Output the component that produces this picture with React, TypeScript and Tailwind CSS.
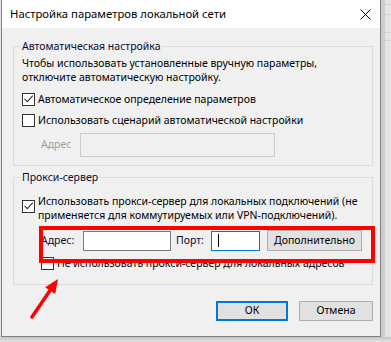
import React from "react";

function CheckBox({ checked }: { checked?: boolean }) {
  return (
    <span className="block w-[13px] h-[13px] shrink-0 border border-[#333333] bg-white">
      {checked && (
        <svg width="11" height="11" viewBox="0 0 11 11" className="block">
          <path d="M1.5 4.8 L4.3 7.6 L9.8 1.6" fill="none" stroke="#333333" strokeWidth="1.1" />
        </svg>
      )}
    </span>
  );
}

export default function App() {
  return (
    <div className="relative w-[391px] h-[342px] overflow-hidden bg-[#e6e6e6] font-['Noto_Sans',sans-serif] text-[10.5px] text-black">
      <div className="flex h-[337px]">
        <div className="w-[1px] bg-[#e6e6e6]" />
        <div className="w-[380px] shrink-0 flex flex-col border-x border-b border-[#7f7f7f] bg-[#f0f0f0]">
          <div className="h-[28px] shrink-0 bg-white flex items-center justify-between pl-[8px] pr-[9px]">
            <span className="text-[11.3px]">Настройка параметров локальной сети</span>
            <svg width="11" height="11" viewBox="0 0 11 11" className="block">
              <path d="M0.5 0.5 L10.5 10.5 M10.5 0.5 L0.5 10.5" stroke="#000000" strokeWidth="1" />
            </svg>
          </div>
          <div className="flex flex-col pt-[11px] pl-[11px] pr-[7px]">
            <fieldset className="border border-[#dcdcdc] px-[8px] pb-[8px]">
              <legend className="-ml-[2px] px-[2px] leading-[14px] text-[#0a0a30]">Автоматическая настройка</legend>
              <p className="mt-[3px] leading-[14px]">
                Чтобы использовать установленные вручную параметры,
                <br />
                отключите автоматическую настройку.
              </p>
              <div className="mt-[8px] flex items-start gap-[3px]">
                <span className="mt-[1px]"><CheckBox checked /></span>
                <span className="leading-[14px]">Автоматическое определение параметров</span>
              </div>
              <div className="mt-[7px] flex items-start gap-[3px]">
                <span className="mt-[1px]"><CheckBox /></span>
                <span className="leading-[14px]">Использовать сценарий автоматической настройки</span>
              </div>
              <div className="mt-[6px] flex items-center">
                <span className="ml-[19px] w-[39px] text-[#a0a0a0]">Адрес</span>
                <div className="w-[195px] h-[24px] border border-[#cccccc] bg-[#f0f0f0]" />
              </div>
            </fieldset>

            <fieldset className="mt-[4px] border border-[#dcdcdc] px-[8px] pb-[14px]">
              <legend className="-ml-[2px] px-[2px] leading-[14px] text-[#0a0a30]">Прокси-сервер</legend>
              <div className="mt-[10px] flex items-start gap-[3px]">
                <span className="mt-[6px]"><CheckBox checked /></span>
                <span className="leading-[14px] whitespace-nowrap">
                  Использовать прокси-сервер для локальных подключений (не
                  <br />
                  применяется для коммутируемых или VPN-подключений).
                </span>
              </div>
              <div className="mt-[8px] ml-[19px] flex items-center">
                <span className="w-[42px] text-[#0a0a30]">Адрес:</span>
                <div className="w-[88px] h-[20px] border border-[#7a7a7a] bg-white" />
                <span className="ml-[5px] w-[35px] text-[#0a0a30]">Порт:</span>
                <div className="w-[49px] h-[20px] border border-[#0078d7] bg-white flex items-center pl-[6px]">
                  <div className="w-[1px] h-[13px] bg-black" />
                </div>
                <div className="ml-[7px] w-[95px] h-[21px] border border-[#adadad] bg-[#e1e1e1] flex items-center justify-center">
                  Дополнительно
                </div>
              </div>
              <div className="mt-[5px] ml-[19px] flex items-start gap-[3px]">
                <span className="mt-[1px]"><CheckBox /></span>
                <span className="leading-[14px]">Не использовать прокси-сервер для локальных адресов</span>
              </div>
            </fieldset>

            <div className="mt-[16px] flex justify-end gap-[11px]">
              <div className="w-[72px] h-[20px] border-2 border-[#0078d7] bg-[#e1e1e1] flex items-center justify-center">ОК</div>
              <div className="w-[74px] h-[20px] border border-[#adadad] bg-[#e1e1e1] flex items-center justify-center">Отмена</div>
            </div>
          </div>
        </div>
        <div className="flex-1 flex flex-col bg-[#e4e4e4] border-l-[4px] border-[#cdcdcd]">
          <div className="h-[5px] border-b border-[#d2d2d2]" />
          <div className="h-[10px] border-b border-[#d2d2d2]" />
          <div className="h-[18px] border-b border-[#d2d2d2]" />
          <div className="h-[8px] border-b border-[#d2d2d2]" />
        </div>
      </div>
      <div className="h-[5px] bg-linear-to-b from-[#c4c4c4] to-[#e6e6e6]" />

      <div className="absolute left-[39px] top-[226px] w-[336px] h-[37px] border-[4px] border-[#ff0000]" />
      <svg className="absolute left-0 top-0 pointer-events-none" width="391" height="342" viewBox="0 0 391 342">
        <line x1="32" y1="317" x2="51" y2="289" stroke="#ff0000" strokeWidth="3.5" strokeLinecap="round" />
        <polygon points="58,279 45.2,287.3 55.2,293.9" fill="#ff0000" />
      </svg>
    </div>
  );
}
